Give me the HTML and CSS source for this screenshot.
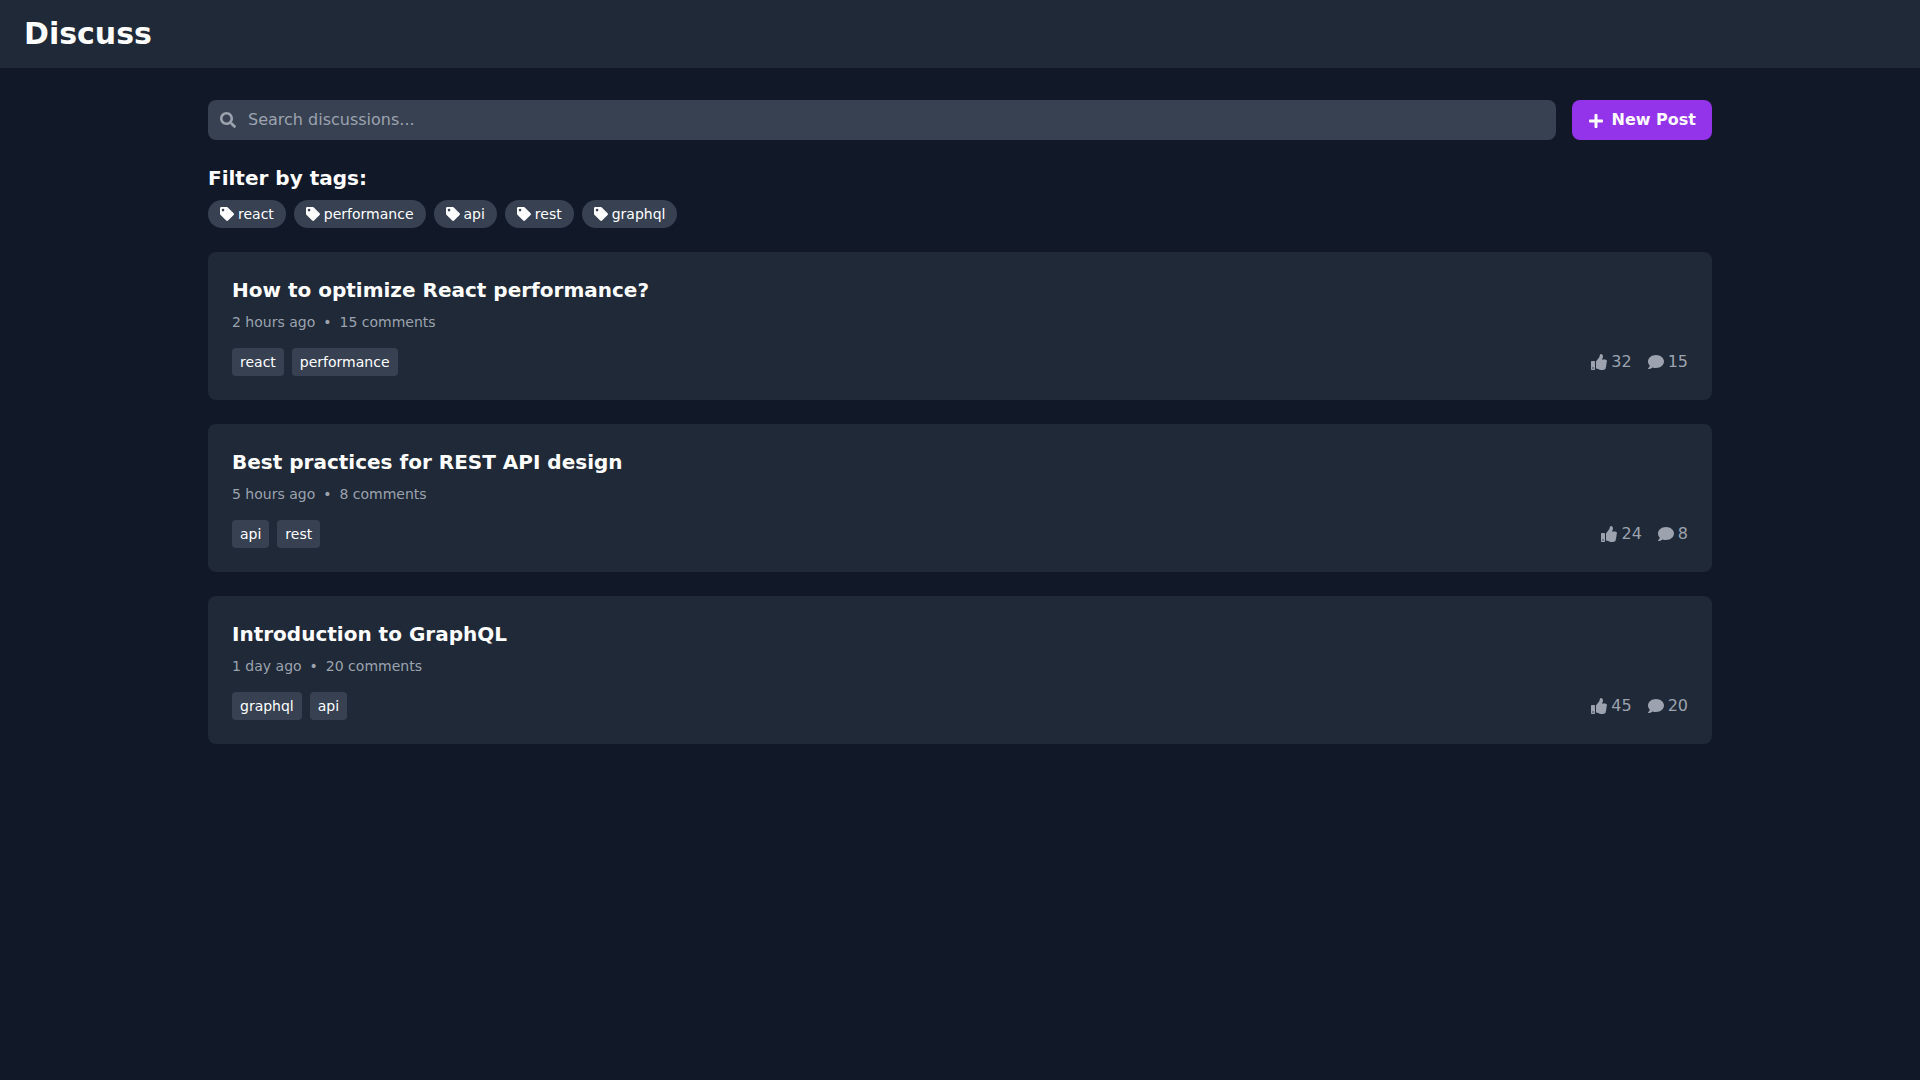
FILE: index.html
```html
<!DOCTYPE html>
<html lang="en">
<head>
    <meta charset="UTF-8">
    <meta name="viewport" content="width=device-width, initial-scale=1.0">
    <title>Discuss</title>
    <link rel="stylesheet" href="styles.css">
</head>
<body>
    <!-- icon shapes, reused below -->
    <svg class="sprite" aria-hidden="true">
        <symbol id="icon-search" viewBox="0 0 512 512">
            <path d="M505 442.7L405.3 343c-4.5-4.5-10.6-7-17-7H372c27.6-35.3 44-79.7 44-128C416 93.1 322.9 0 208 0S0 93.1 0 208s93.1 208 208 208c48.3 0 92.7-16.4 128-44v16.3c0 6.4 2.5 12.5 7 17l99.7 99.7c9.4 9.4 24.6 9.4 33.9 0l28.3-28.3c9.4-9.4 9.4-24.6.1-34zM208 336c-70.7 0-128-57.2-128-128 0-70.7 57.2-128 128-128 70.7 0 128 57.2 128 128 0 70.7-57.2 128-128 128z"/>
        </symbol>
        <symbol id="icon-plus" viewBox="0 0 448 512">
            <path d="M416 208H272V64c0-17.67-14.33-32-32-32h-32c-17.67 0-32 14.33-32 32v144H32c-17.67 0-32 14.33-32 32v32c0 17.67 14.33 32 32 32h144v144c0 17.67 14.33 32 32 32h32c17.67 0 32-14.33 32-32V304h144c17.67 0 32-14.33 32-32v-32c0-17.67-14.33-32-32-32z"/>
        </symbol>
        <symbol id="icon-tag" viewBox="0 0 512 512">
            <path d="M0 252.118V48C0 21.49 21.49 0 48 0h204.118a48 48 0 0 1 33.941 14.059l211.882 211.882c18.745 18.745 18.745 49.137 0 67.882L293.823 497.941c-18.745 18.745-49.137 18.745-67.882 0L14.059 286.059A48 48 0 0 1 0 252.118zM112 64c-26.51 0-48 21.49-48 48s21.49 48 48 48 48-21.49 48-48-21.49-48-48-48z"/>
        </symbol>
        <symbol id="icon-like" viewBox="0 0 512 512">
            <path d="M104 224H24c-13.255 0-24 10.745-24 24v240c0 13.255 10.745 24 24 24h80c13.255 0 24-10.745 24-24V248c0-13.255-10.745-24-24-24zM64 472c-13.255 0-24-10.745-24-24s10.745-24 24-24 24 10.745 24 24-10.745 24-24 24zM384 81.452c0 42.416-25.97 66.208-33.277 94.548h101.723c33.397 0 59.397 27.746 59.553 58.098.084 17.938-7.546 37.249-19.439 49.197l-.11.11c9.836 23.337 8.237 56.037-9.308 79.469 8.681 25.895-.069 57.704-16.382 74.757 4.298 17.598 2.244 32.575-6.148 44.632C440.202 511.587 389.616 512 346.839 512l-2.845-.001c-48.287-.017-87.806-17.598-119.56-31.725-15.957-7.099-36.821-15.887-52.651-16.178-6.54-.12-11.783-5.457-11.783-11.998v-213.77c0-3.2 1.282-6.271 3.558-8.521 39.614-39.144 56.648-80.587 89.117-113.111 14.804-14.832 20.188-37.236 25.393-58.902C282.515 39.293 291.817 0 312 0c24 0 72 8 72 81.452z"/>
        </symbol>
        <symbol id="icon-comment" viewBox="0 0 512 512">
            <path d="M256 32C114.6 32 0 125.1 0 240c0 49.6 21.4 95 57 130.7C44.5 421.1 2.7 466 2.2 466.5c-2.2 2.3-2.8 5.7-1.5 8.7S4.8 480 8 480c66.3 0 116-31.8 140.6-51.4 32.7 12.3 69 19.4 107.4 19.4 141.4 0 256-93.1 256-208S397.4 32 256 32z"/>
        </symbol>
    </svg>

    <header class="header">
        <h1>Discuss</h1>
    </header>

    <main class="container">
        <div class="toolbar">
            <div class="search">
                <svg class="icon search-icon"><use href="#icon-search"/></svg>
                <input type="text" class="search-input" placeholder="Search discussions..." aria-label="Search discussions">
            </div>
            <button type="button" class="btn"><svg class="icon btn-icon"><use href="#icon-plus"/></svg>New Post</button>
        </div>

        <section class="filters">
            <h2>Filter by tags:</h2>
            <div class="tag-list">
                <button type="button" class="filter-tag"><svg class="icon"><use href="#icon-tag"/></svg>react</button>
                <button type="button" class="filter-tag"><svg class="icon"><use href="#icon-tag"/></svg>performance</button>
                <button type="button" class="filter-tag"><svg class="icon"><use href="#icon-tag"/></svg>api</button>
                <button type="button" class="filter-tag"><svg class="icon"><use href="#icon-tag"/></svg>rest</button>
                <button type="button" class="filter-tag"><svg class="icon"><use href="#icon-tag"/></svg>graphql</button>
            </div>
        </section>

        <div class="posts">
            <article class="post">
                <h2>How to optimize React performance?</h2>
                <div class="post-meta">
                    <span>2 hours ago</span>
                    <span>•</span>
                    <span>15 comments</span>
                </div>
                <div class="post-footer">
                    <div class="tag-list">
                        <span class="post-tag">react</span>
                        <span class="post-tag">performance</span>
                    </div>
                    <div class="post-stats">
                        <span class="stat"><svg class="icon"><use href="#icon-like"/></svg>32</span>
                        <span class="stat"><svg class="icon"><use href="#icon-comment"/></svg>15</span>
                    </div>
                </div>
            </article>

            <article class="post">
                <h2>Best practices for REST API design</h2>
                <div class="post-meta">
                    <span>5 hours ago</span>
                    <span>•</span>
                    <span>8 comments</span>
                </div>
                <div class="post-footer">
                    <div class="tag-list">
                        <span class="post-tag">api</span>
                        <span class="post-tag">rest</span>
                    </div>
                    <div class="post-stats">
                        <span class="stat"><svg class="icon"><use href="#icon-like"/></svg>24</span>
                        <span class="stat"><svg class="icon"><use href="#icon-comment"/></svg>8</span>
                    </div>
                </div>
            </article>

            <article class="post">
                <h2>Introduction to GraphQL</h2>
                <div class="post-meta">
                    <span>1 day ago</span>
                    <span>•</span>
                    <span>20 comments</span>
                </div>
                <div class="post-footer">
                    <div class="tag-list">
                        <span class="post-tag">graphql</span>
                        <span class="post-tag">api</span>
                    </div>
                    <div class="post-stats">
                        <span class="stat"><svg class="icon"><use href="#icon-like"/></svg>45</span>
                        <span class="stat"><svg class="icon"><use href="#icon-comment"/></svg>20</span>
                    </div>
                </div>
            </article>
        </div>
    </main>
</body>
</html>
```

FILE: styles.css
```css
* {
    margin: 0;
    padding: 0;
    box-sizing: border-box;
}

body {
    font-family: 'DejaVu Sans', sans-serif;
    font-size: 16px;
    line-height: 24px;
    background: #111827;
    color: white;
    min-height: 100vh;
}

button,
input {
    font: inherit;
    color: inherit;
    border: none;
}

button {
    cursor: pointer;
}

h2 {
    font-size: 20px;
    line-height: 28px;
    margin-bottom: 8px;
}

.sprite {
    display: none;
}

.icon {
    width: 1em;
    height: 1em;
    fill: currentColor;
    flex-shrink: 0;
}

.header {
    background: #1f2937;
    padding: 16px 24px;
}

.header h1 {
    font-size: 30px;
    line-height: 36px;
}

.container {
    max-width: 1536px;
    margin: 0 auto;
    padding: 32px 16px;
}

.toolbar {
    display: flex;
    gap: 16px;
    margin-bottom: 24px;
}

.search {
    position: relative;
    display: flex;
    flex: 1;
    align-items: center;
}

.search-icon {
    position: absolute;
    left: 12px;
    color: #9ca3af;
}

.search-input {
    width: 100%;
    padding: 8px 16px 8px 40px;
    background: #374151;
    border-radius: 8px;
}

.search-input::placeholder {
    color: #9ca3af;
}

.search-input:focus {
    outline: 2px solid #9333ea;
}

.btn {
    background: #9333ea;
    font-weight: bold;
    padding: 8px 16px;
    border-radius: 8px;
}

.btn:hover {
    background: #7e22ce;
}

.btn-icon {
    margin-right: 8px;
    vertical-align: middle;
}

.filters {
    margin-bottom: 24px;
}

.tag-list {
    display: flex;
    flex-wrap: wrap;
    gap: 8px;
}

.filter-tag {
    display: flex;
    align-items: center;
    gap: 4px;
    padding: 4px 12px;
    background: #374151;
    border-radius: 14px;
    font-size: 14px;
    line-height: 20px;
}

.filter-tag:hover {
    background: #4b5563;
}

.posts {
    display: flex;
    flex-direction: column;
    gap: 24px;
}

.post {
    background: #1f2937;
    padding: 24px;
    border-radius: 8px;
}

.post-meta {
    display: flex;
    gap: 8px;
    margin-bottom: 16px;
    color: #9ca3af;
    font-size: 14px;
    line-height: 20px;
}

.post-footer {
    display: flex;
    justify-content: space-between;
    align-items: center;
}

.post-tag {
    padding: 4px 8px;
    background: #374151;
    border-radius: 4px;
    font-size: 14px;
    line-height: 20px;
}

.post-stats {
    display: flex;
    gap: 16px;
    color: #9ca3af;
}

.stat {
    display: flex;
    align-items: center;
    gap: 4px;
}
```
